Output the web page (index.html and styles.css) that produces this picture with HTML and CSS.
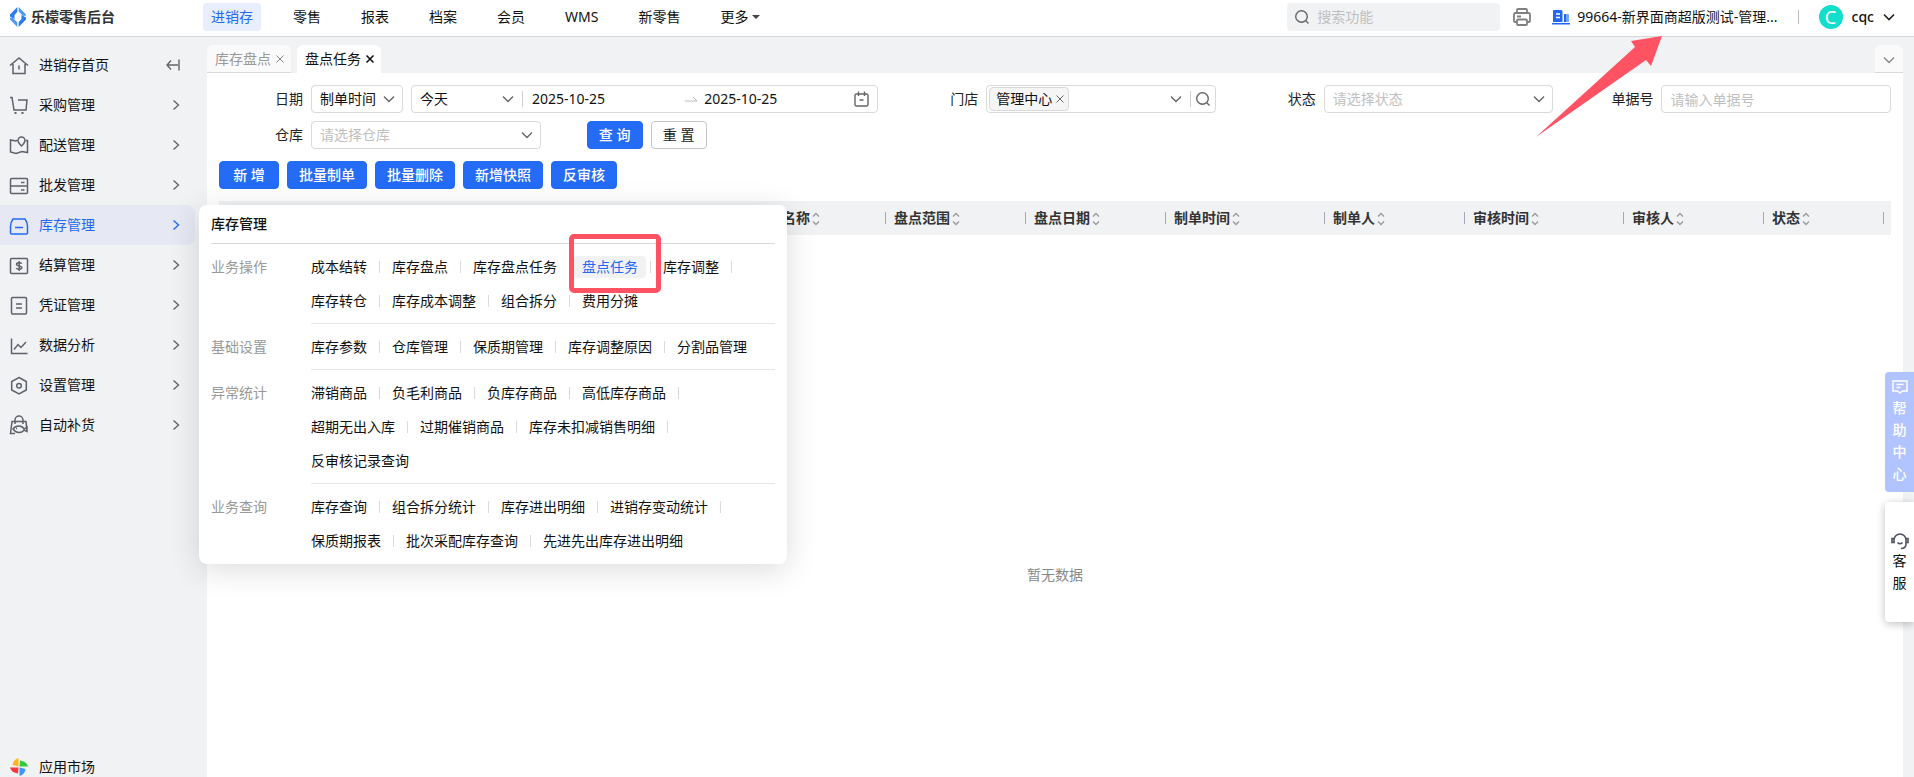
FILE: index.html
```html
<!DOCTYPE html>
<html lang="zh-CN">
<head>
<meta charset="utf-8">
<title>乐檬零售后台</title>
<link rel="stylesheet" href="styles.css">
</head>
<body>
<svg class="defs" aria-hidden="true">
  <symbol id="right" viewBox="0 0 8 12"><path d="M1.5 1.5 6.5 6l-5 4.5"/></symbol>
  <symbol id="down" viewBox="0 0 12 8"><path d="M1 1.5 6 6.5l5-5"/></symbol>
  <symbol id="close" viewBox="0 0 10 10"><path d="m1.5 1.5 7 7m0-7-7 7"/></symbol>
  <symbol id="search" viewBox="0 0 16 16"><circle cx="7.5" cy="7.5" r="5.8"/><path d="m11.8 11.8 2.7 2.7"/></symbol>
  <symbol id="sort" viewBox="0 0 8 14"><path d="M1 4.500 4 1.500l3 3M1 9.500l3 3 3-3"/></symbol>
</svg>

<header class="header">
  <div class="brand">
    <svg class="logo" viewBox="0 0 16 20"><path fill="#2b7bf3" d="M7.300 0v5L4.500 8v4L0 9.500V7.500zM8.700 20v-5l2.800-3V8L16 10.500v2z"/><path fill="#4a9bfb" d="M8.700 0v4.500l4.300 4.500 3-.5v-1zM7.300 20v-4.500L3 11l-3-.5v2z"/></svg>
    <span class="brand-name">乐檬零售后台</span>
  </div>
  <nav class="top-nav">
    <a class="top-link active" href="#">进销存</a>
    <a class="top-link" href="#">零售</a>
    <a class="top-link" href="#">报表</a>
    <a class="top-link" href="#">档案</a>
    <a class="top-link" href="#">会员</a>
    <a class="top-link" href="#">WMS</a>
    <a class="top-link" href="#">新零售</a>
    <a class="top-link more" href="#">更多<span class="caret"></span></a>
  </nav>
  <div class="tools">
    <label class="search"><svg class="ico16"><use href="#search"/></svg><input type="text" placeholder="搜索功能" aria-label="搜索功能"></label>
    <button class="icon-btn printer" aria-label="打印"><svg viewBox="0 0 18 18"><path d="M4 5V2a1 1 0 0 1 1-1h8a1 1 0 0 1 1 1v3M4 14H2a1 1 0 0 1-1-1V6.500A1.500 1.500 0 0 1 2.500 5h13A1.500 1.500 0 0 1 17 6.500V13a1 1 0 0 1-1 1h-2M4 8.500h4"/><rect x="4" y="11.500" width="10" height="5.500" rx="1"/></svg></button>
    <a class="org" href="#"><svg viewBox="0 0 18 16"><path fill="#2266f2" d="M2 1h7a1.500 1.500 0 0 1 1.500 1.500V13H1V2a1 1 0 0 1 1-1zM0 14h18v1.500H0z"/><path fill="#7ba6ff" d="M12 5h4a1 1 0 0 1 1 1v7h-5z"/><path fill="#2266f2" d="M12 5h2v8h-2z"/><path stroke="#fff" stroke-width="1.400" d="M4 5h4M4 8.500h4"/></svg><span>99664-新界面商超版测试-管理...</span></a>
    <button class="user"><span class="avatar">C</span><span>cqc</span><svg class="down"><use href="#down"/></svg></button>
  </div>
</header>

<div class="body">
  <aside class="sidebar">
    <nav class="menu">
      <a class="menu-item" href="#"><svg class="mi" viewBox="0 0 20 20"><path d="M1 10.500 10 3l9 7.500M4 9v9.500h12V9M10 10.500v4"/></svg><span>进销存首页</span><svg class="fold" viewBox="0 0 14 12"><path d="M13 .5v11M12 6H1M5 1.500 1 6l4 4.500"/></svg></a>
      <a class="menu-item" href="#"><svg class="mi" viewBox="0 0 20 20"><path d="M1 2.500h2l2 12.500h12L18 5H9"/><path class="fill" d="M5.500 17h2v2h-2zM12.500 17h2v2h-2z"/></svg><span>采购管理</span><svg class="right"><use href="#right"/></svg></a>
      <a class="menu-item" href="#"><svg class="mi" viewBox="0 0 20 20"><path d="M8.500 5 7 6 1.500 5v12L7 18.500l6-2 5.500 1V5.500h-2"/><path d="M12.500 11c-2-2-3.500-3.500-3.500-5.500a3.500 3.500 0 0 1 7 0c0 2-1.500 3.500-3.500 5.500z"/></svg><span>配送管理</span><svg class="right"><use href="#right"/></svg></a>
      <a class="menu-item" href="#"><svg class="mi" viewBox="0 0 20 20"><rect x="1.500" y="3.500" width="17" height="15" rx="1"/><path d="M1.500 11h17M12 7.500h3.500M12 15h3.500"/></svg><span>批发管理</span><svg class="right"><use href="#right"/></svg></a>
      <a class="menu-item active" href="#"><svg class="mi" viewBox="0 0 20 20"><path d="M4 4h12c1.500 2 2.500 4.500 2.500 7.500V18a1 1 0 0 1-1 1h-15a1 1 0 0 1-1-1v-6.500C1.500 8.500 2.500 6 4 4zM6 12.500h8"/></svg><span>库存管理</span><svg class="right"><use href="#right"/></svg></a>
      <a class="menu-item" href="#"><svg class="mi" viewBox="0 0 20 20"><rect x="1.500" y="3.500" width="17" height="15" rx="1"/><path d="M12.800 8.700C12 7.500 7.500 7 7.500 9.300s5.300 1 5.300 3.300-4.700 2-5.600.6M10.200 6v10"/></svg><span>结算管理</span><svg class="right"><use href="#right"/></svg></a>
      <a class="menu-item" href="#"><svg class="mi" viewBox="0 0 20 20"><rect x="2.500" y="2.500" width="15" height="16.500" rx="1"/><path d="M7 9h6M7 13h6"/></svg><span>凭证管理</span><svg class="right"><use href="#right"/></svg></a>
      <a class="menu-item" href="#"><svg class="mi" viewBox="0 0 20 20"><path d="M2.500 3.500v15h16M5 14.500l4-5 3 3 5-5.500"/></svg><span>数据分析</span><svg class="right"><use href="#right"/></svg></a>
      <a class="menu-item" href="#"><svg class="mi" viewBox="0 0 20 20"><path d="m10 2.500 7.300 4v8.500L10 19l-7.300-4V6.500z"/><circle cx="10" cy="10.800" r="2.300"/></svg><span>设置管理</span><svg class="right"><use href="#right"/></svg></a>
      <a class="menu-item" href="#"><svg class="mi" viewBox="0 0 20 20"><path d="M6 18.500H1.500l1.500-12h14l1 10M6 9V5a4 4 0 0 1 8 0v4M4 14c3-4 9-4 11 0l3-2v4.500L15 15c-2 3.500-8 3.500-11-1z"/><path d="M7 13.500h1"/></svg><span>自动补货</span><svg class="right"><use href="#right"/></svg></a>
    </nav>
    <a class="menu-item market" href="#"><svg class="mi" viewBox="0 0 20 20"><g stroke="none"><path fill="#ffb81c" d="M9.500 9.500V1C6 2 4 4.500 3.500 8z"/><path fill="#35c93b" d="M10.500 9.500H19C18 6 15.500 4 11 3.500z"/><path fill="#3b95ff" d="M10.500 10.500V19c3.500-1 5.500-3.500 6-7z"/><path fill="#f8383d" d="M9.500 10.500H1C2 14 4.500 16 9 16.500z"/></g></svg><span>应用市场</span></a>
  </aside>

  <main class="main">
    <div class="tabs">
      <button class="tab">库存盘点<svg class="x"><use href="#close"/></svg></button>
      <button class="tab current">盘点任务<svg class="x"><use href="#close"/></svg></button>
      <button class="tab-more" aria-label="更多标签"><svg class="down"><use href="#down"/></svg></button>
    </div>
    <div class="page">
      <form class="filters">
        <div class="field wide">
          <label for="dt">日期</label>
          <div class="pick kind"><select id="dt"><option>制单时间</option></select><svg class="down"><use href="#down"/></svg></div>
          <div class="range">
            <div class="pick quick"><select aria-label="快捷日期"><option>今天</option></select><svg class="down"><use href="#down"/></svg></div>
            <input type="text" value="2025-10-25" aria-label="开始日期">
            <svg class="to" viewBox="0 0 12 6"><path d="M0 5h12L8 1"/></svg>
            <input type="text" value="2025-10-25" aria-label="结束日期">
            <svg class="cal" viewBox="0 0 16 16"><rect x="2" y="3" width="13" height="12" rx="1.500"/><path d="M5.500 .5V5M11.500 .5V5M6.500 9h4"/></svg>
          </div>
        </div>
        <div class="field">
          <label for="store">门店</label>
          <div class="box store"><span class="chip">管理中心<svg class="x"><use href="#close"/></svg></span><input id="store" type="text"><svg class="down"><use href="#down"/></svg><button type="button" class="lookup" aria-label="查找门店"><svg class="ico16"><use href="#search"/></svg></button></div>
        </div>
        <div class="field">
          <label for="state">状态</label>
          <div class="pick box hint"><select id="state"><option>请选择状态</option></select><svg class="down"><use href="#down"/></svg></div>
        </div>
        <div class="field">
          <label for="no">单据号</label>
          <input class="box" id="no" type="text" placeholder="请输入单据号">
        </div>
        <div class="field">
          <label for="wh">仓库</label>
          <div class="pick box hint"><select id="wh"><option>请选择仓库</option></select><svg class="down"><use href="#down"/></svg></div>
        </div>
        <div class="form-btns"><button type="button" class="btn primary">查 询</button><button type="button" class="btn">重 置</button></div>
      </form>

      <div class="actions">
        <button class="btn primary new">新 增</button>
        <button class="btn primary">批量制单</button>
        <button class="btn primary">批量删除</button>
        <button class="btn primary">新增快照</button>
        <button class="btn primary">反审核</button>
      </div>

      <table class="grid">
        <colgroup><col class="c-no"><col class="c-lead"><col class="c-m"><col class="c-m"><col class="c-m"><col class="c-l"><col class="c-m"><col class="c-l"><col class="c-m"><col class="c-s"><col></colgroup>
        <thead><tr>
          <th></th><th></th>
          <th>盘点名称<svg class="sort"><use href="#sort"/></svg></th>
          <th>盘点范围<svg class="sort"><use href="#sort"/></svg></th>
          <th>盘点日期<svg class="sort"><use href="#sort"/></svg></th>
          <th>制单时间<svg class="sort"><use href="#sort"/></svg></th>
          <th>制单人<svg class="sort"><use href="#sort"/></svg></th>
          <th>审核时间<svg class="sort"><use href="#sort"/></svg></th>
          <th>审核人<svg class="sort"><use href="#sort"/></svg></th>
          <th>状态<svg class="sort"><use href="#sort"/></svg></th>
          <th></th>
        </tr></thead>
      </table>
      <div class="empty">暂无数据</div>
    </div>
  </main>
</div>

<section class="flyout">
  <h2>库存管理</h2>
  <div class="group"><h3>业务操作</h3><ul><li><a href="#">成本结转</a></li><li><a href="#">库存盘点</a></li><li><a href="#">库存盘点任务</a></li><li><a class="on" href="#">盘点任务</a><span class="mark"></span></li><li><a href="#">库存调整</a></li><li><a href="#">库存转仓</a></li><li><a href="#">库存成本调整</a></li><li><a href="#">组合拆分</a></li><li><a href="#">费用分摊</a></li></ul></div>
  <div class="group"><h3>基础设置</h3><ul><li><a href="#">库存参数</a></li><li><a href="#">仓库管理</a></li><li><a href="#">保质期管理</a></li><li><a href="#">库存调整原因</a></li><li><a href="#">分割品管理</a></li></ul></div>
  <div class="group"><h3>异常统计</h3><ul><li><a href="#">滞销商品</a></li><li><a href="#">负毛利商品</a></li><li><a href="#">负库存商品</a></li><li><a href="#">高低库存商品</a></li><li><a href="#">超期无出入库</a></li><li><a href="#">过期催销商品</a></li><li><a href="#">库存未扣减销售明细</a></li><li><a href="#">反审核记录查询</a></li></ul></div>
  <div class="group"><h3>业务查询</h3><ul><li><a href="#">库存查询</a></li><li><a href="#">组合拆分统计</a></li><li><a href="#">库存进出明细</a></li><li><a href="#">进销存变动统计</a></li><li><a href="#">保质期报表</a></li><li><a href="#">批次采配库存查询</a></li><li><a href="#">先进先出库存进出明细</a></li></ul></div>
</section>

<svg class="pointer" viewBox="0 0 126 101" aria-hidden="true"><path fill="#ff5364" d="M126 0 95 5l4 6L0 101 110 24l5 6z"/></svg>

<div class="dock">
  <button class="help"><svg viewBox="0 0 16 14"><path d="M1 1h14v10h-4.500L8 13l-2.500-2H1zM4.500 4.500h7M4.500 7.500h4"/></svg>帮助中心</button>
  <button class="service"><svg viewBox="0 0 18 18"><path d="M3 11V8a6 6 0 0 1 12 0v4c0 3-2 4.500-5 4.500M3 6.500H1v4h2zM15 6.500h2v4h-2zM6.500 10.500c1.500 1.500 3.500 1.500 5 0"/></svg>客服</button>
</div>
</body>
</html>
```
FILE: styles.css
```css
* { box-sizing: border-box; }
body {
  margin: 0;
  height: 100vh;
  overflow: hidden;
  display: flex;
  flex-direction: column;
  position: relative;
  background: #f1f2f4;
  color: #111;
  font: 14px/20px "Noto Sans", "Noto Sans CJK SC", sans-serif;
}
button, input, select { font: inherit; color: inherit; margin: 0; padding: 0; border: 0; background: none; outline: 0; }
input { min-width: 0; }
input::placeholder { color: #bfbfbf; opacity: 1; }
a { color: inherit; text-decoration: none; }
svg { flex: none; fill: none; stroke: #666; stroke-width: 1.4; overflow: visible; }
.defs { position: absolute; width: 0; height: 0; }
.ico16 { width: 16px; height: 16px; }
.down { width: 12px; height: 8px; }
.x { width: 10px; height: 10px; stroke-width: 1; }

/* header */
.header { display: flex; align-items: center; height: 37px; flex: none; background: #fff; border-bottom: 1px solid #d5d7d9; padding: 0 19px 0 10px; }
.brand { display: flex; align-items: center; gap: 5px; width: 193px; padding-bottom: 2px; }
.logo { width: 16px; height: 20px; stroke: none; }
.brand-name { font-weight: 700; color: #333; }
.top-nav { display: flex; gap: 24px; flex: 1; padding-bottom: 2px; }
.top-link { height: 28px; line-height: 28px; padding: 0 8px; border-radius: 4px; }
.top-link.active { background: #e8eefc; color: #2468f2; }
.more { display: flex; align-items: center; gap: 4px; }
.caret { border: 4px solid transparent; border-top-color: #444; border-bottom: 0; }
.tools { display: flex; align-items: center; padding-bottom: 2px; }
.search { display: flex; align-items: center; gap: 7px; width: 213px; height: 28px; padding: 0 7px; border-radius: 4px; background: #f1f2f4; }
.search input { flex: 1; }
.icon-btn { display: flex; margin: 0 21px 0 13px; }
.icon-btn svg { width: 18px; height: 18px; stroke: #808080; stroke-width: 1.8; }
.org { display: flex; align-items: center; gap: 7px; padding-right: 20px; }
.org svg { width: 18px; height: 16px; stroke: none; }
.user { display: flex; align-items: center; gap: 9px; font-weight: 500; }
.user::before { content: ""; height: 14px; border-left: 1px solid #bbb; margin-right: 11px; }
.user svg { stroke: #222; stroke-width: 1.6; }
.avatar { width: 24px; height: 24px; line-height: 24px; border-radius: 50%; background: #12dfcb; color: #fff; font-size: 18px; font-weight: 400; }

.body { flex: 1; display: flex; min-height: 0; }

/* sidebar */
.sidebar { width: 207px; flex: none; display: flex; flex-direction: column; justify-content: space-between; padding: 8px 12px 0 0; margin-bottom: -10px; }
.menu-item { display: flex; align-items: center; height: 40px; padding: 0 15px 0 9px; border-radius: 0 8px 8px 0; }
.menu-item span { flex: 1; margin-left: 10px; }
.mi { width: 20px; height: 20px; stroke: #5f626b; stroke-width: 1.5; }
.mi .fill { fill: #5f626b; stroke: none; }
.right { width: 8px; height: 12px; }
.fold { width: 14px; height: 12px; }
.menu-item.active { background: #e6e9f4; color: #2468f2; }
.menu-item.active svg { stroke: #2468f2; }
.market { flex: none; }

/* main */
.main { flex: 1; min-width: 0; display: flex; flex-direction: column; padding: 8px 11px 0 0; }
.tabs { display: flex; gap: 6px; }
.tab { display: flex; align-items: center; gap: 4px; width: 84px; height: 28px; padding-left: 8px; border-radius: 6px 6px 0 0; background: #fafafa; border-bottom: 1px solid #d9d9d9; color: #999; }
.tab svg { stroke: #888; }
.tab.current { background: #fff; border-color: #fff; color: #111; }
.tab.current svg { stroke: #111; stroke-width: 1.6; }
.tab-more { width: 28px; height: 28px; margin-left: auto; background: #fafafa; border-bottom: 1px solid #d9d9d9; border-radius: 6px 6px 0 0; }
.tab-more svg { stroke: #888; }
.page { flex: 1; display: flex; flex-direction: column; background: #fff; padding: 12px; }

.filters { display: grid; grid-template-columns: repeat(5, 1fr); gap: 8px 16px; }
.field { display: flex; align-items: center; gap: 8px; min-width: 0; height: 28px; }
.field > label { width: 84px; flex: none; text-align: right; color: #222; }
.wide { grid-column: span 2; }
.box, .kind, .range { height: 28px; border: 1px solid #d9d9d9; border-radius: 4px; }
.box { flex: 1; padding: 0 8px; }
.pick { display: flex; align-items: center; padding: 0 7px 0 8px; }
.pick select { flex: 1; appearance: none; min-width: 0; }
.hint select { color: #bfbfbf; }
.kind { width: 92px; }
.range { flex: 1; display: flex; align-items: center; padding-right: 8px; min-width: 0; }
.quick { width: 111px; border-right: 1px solid #d0d0d0; height: 16px; margin-right: 9px; padding-right: 8px; }
.range input { flex: 1; }
.to { width: 12px; height: 6px; stroke: #bbb; stroke-width: 1; margin-right: 7px; }
.range .to + input { flex: 0 1 149px; }
.cal { width: 16px; height: 16px; }
.store { display: flex; align-items: center; padding: 0 0 0 2px; min-width: 0; }
.store input { flex: 1; }
.chip { display: flex; align-items: center; gap: 3px; height: 24px; padding: 0 3px 0 6px; background: #f5f5f5; border: 1px solid #d9d9d9; border-radius: 4px; }
.lookup { display: flex; height: 16px; border-left: 1px solid #d0d0d0; padding: 0 4px; margin-left: 8px; }
.form-btns { display: flex; gap: 8px; padding-left: 30px; }

.btn { height: 28px; line-height: 26px; min-width: 56px; padding: 0 11px; border: 1px solid #c4c4c4; border-radius: 4px; background: #fff; color: #222; }
.btn.primary { background: #246bf5; border-color: #246bf5; color: #fff; font-weight: 500; }
.btn.new { min-width: 60px; }
.actions { display: flex; gap: 8px; margin: 12px 0; }

.grid { width: 100%; table-layout: fixed; border-collapse: collapse; background: #f1f2f4; }
.grid th { height: 34px; padding: 0 8px; text-align: left; font-weight: 700; color: #333; position: relative; white-space: nowrap; }
.grid th:not(:last-child)::after { content: ""; position: absolute; right: 0; top: 11px; height: 12px; border-right: 1px solid #a5a8b3; }
.sort { width: 8px; height: 14px; margin-left: 2px; vertical-align: -3px; stroke: #999; stroke-width: 1.3; }
.c-no { width: 77px; }
.c-lead { width: 450px; }
.c-m { width: 140px; }
.c-l { width: 159px; }
.c-s { width: 120px; }
.empty { flex: 1; display: flex; align-items: center; justify-content: center; padding-top: 150px; color: #888; }

/* flyout */
.flyout { position: absolute; left: 199px; top: 205px; width: 588px; padding: 0 12px 1px; background: #fff; border-radius: 8px; box-shadow: 0 6px 32px rgba(0, 0, 0, .14); }
.flyout h2, .flyout h3 { margin: 0; font-size: 14px; font-weight: 400; }
.flyout h2 { font-weight: 500; line-height: 38px; border-bottom: 1px solid #d9d9d9; }
.group { display: flex; }
.group h3 { width: 100px; padding-top: 6px; line-height: 34px; color: #999; }
.group ul { flex: 1; display: flex; flex-wrap: wrap; list-style: none; margin: 0; padding: 6px 8px 5px 0; border-bottom: 1px solid #e6e6e6; }
.group:last-child ul { border-bottom: 0; }
.group li { display: flex; align-items: center; height: 34px; margin-left: -8px; margin-right: 8px; position: relative; }
.group li:not(:last-child)::after { content: ""; height: 12px; border-left: 1px solid #d9d9d9; margin: 0 4px; }
.group a { height: 22px; line-height: 22px; padding: 0 8px; border-radius: 4px; }
.group a.on { background: #f1f2f4; color: #2468f2; }
.mark { position: absolute; left: -5px; top: -16px; width: 92px; height: 59px; border: 5px solid #ff5364; border-radius: 5px; }

.pointer { position: absolute; right: 252px; top: 36px; width: 126px; height: 101px; stroke: none; }

.dock { position: absolute; right: 0; top: 372px; display: flex; flex-direction: column; gap: 10px; }
.dock button { display: flex; flex-direction: column; align-items: center; justify-content: center; width: 29px; height: 120px; padding: 1px 7px 0; border-radius: 4px 0 0 4px; line-height: 22px; }
.dock .help { background: #b1c4ff; color: #fff; font-weight: 500; }
.help svg { width: 16px; height: 14px; stroke: #fff; margin-bottom: 3px; }
.dock .service { background: #fff; box-shadow: 0 2px 8px rgba(0, 0, 0, .25); }
.service svg { width: 18px; height: 18px; stroke: #4f5160; stroke-width: 1.6; }
```
